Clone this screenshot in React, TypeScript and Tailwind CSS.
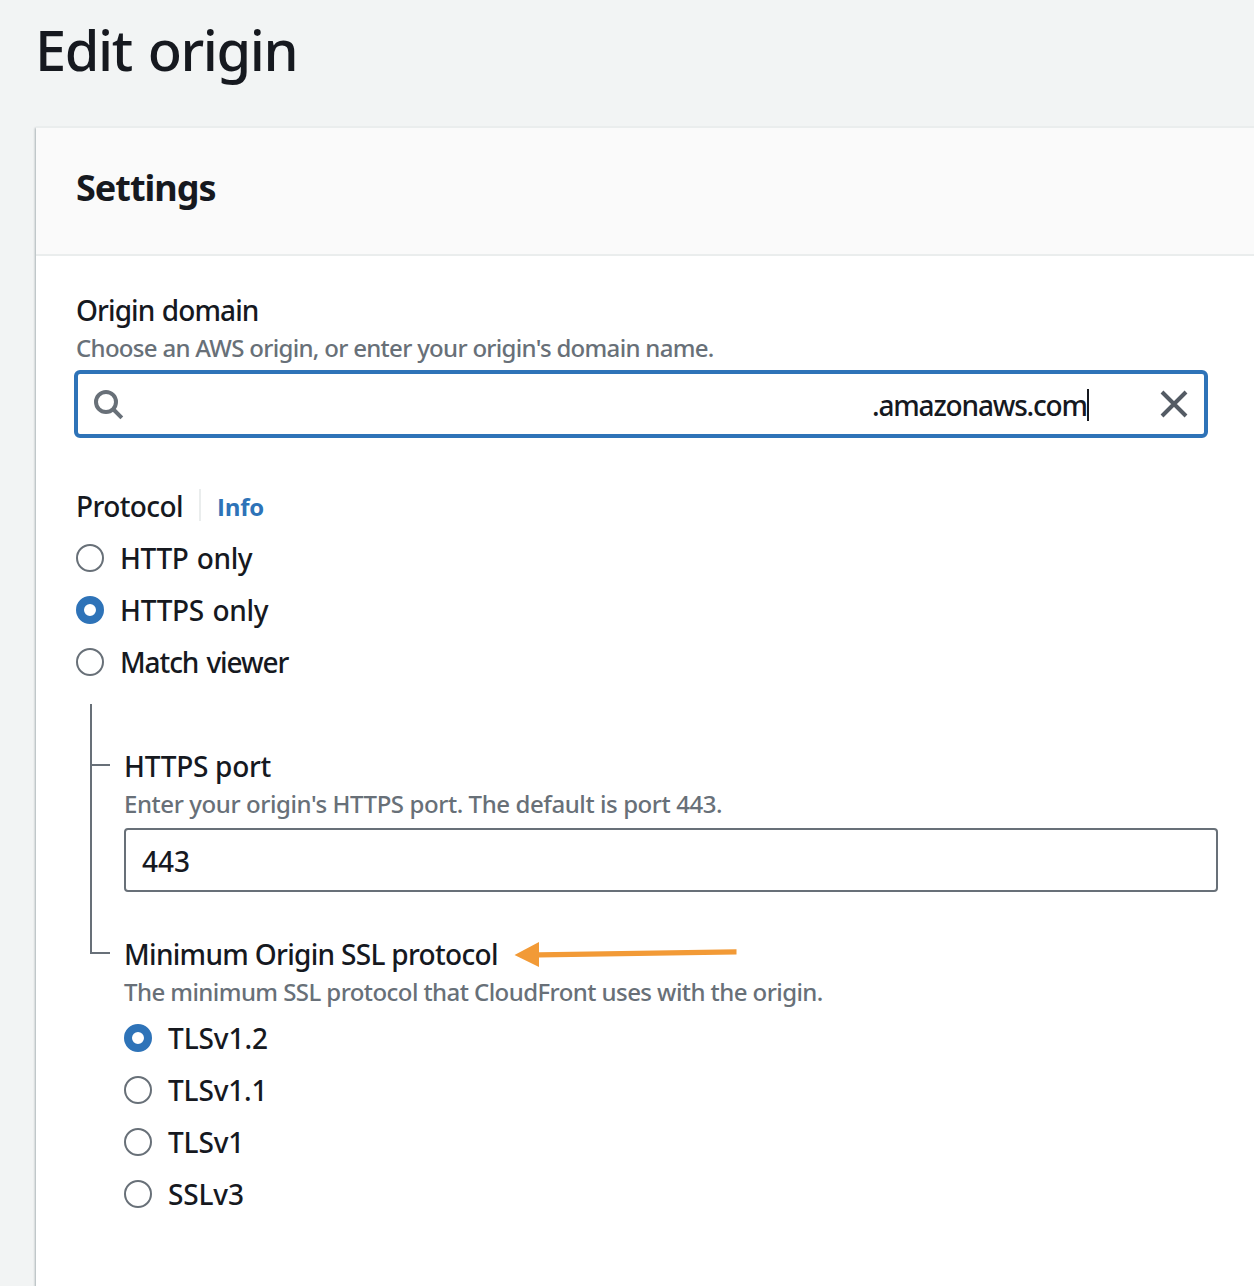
import type { ReactNode } from 'react';

function Label({ children, className = '' }: { children: ReactNode; className?: string }) {
  return <div className={`h-11 whitespace-nowrap text-[28px] leading-[46px] ${className}`}>{children}</div>;
}

function Hint({ children, className = '' }: { children: ReactNode; className?: string }) {
  return (
    <div className={`h-8 whitespace-nowrap text-2xl leading-8 text-[#687078] ${className}`}>{children}</div>
  );
}

type Option = { label: string; checked?: boolean; spacing: string };

function Radio({ label, checked = false, spacing }: Option) {
  return (
    <label className="flex h-[52px] items-center gap-4">
      {checked ? (
        <span className="size-7 rounded-full border-8 border-[#2e73b8] bg-white" />
      ) : (
        <span className="size-7 rounded-full border-2 border-[#687078] bg-white" />
      )}
      <span className={`whitespace-nowrap text-[28px] leading-[44px] ${spacing}`}>{label}</span>
    </label>
  );
}

const protocols: Option[] = [
  { label: 'HTTP only', spacing: 'tracking-[-0.4px] [word-spacing:1.5px]' },
  { label: 'HTTPS only', checked: true, spacing: 'tracking-[-0.3px] [word-spacing:1.5px]' },
  { label: 'Match viewer', spacing: 'tracking-[-1.1px] [word-spacing:2px]' },
];

const sslProtocols: Option[] = [
  { label: 'TLSv1.2', checked: true, spacing: 'tracking-[-0.08px]' },
  { label: 'TLSv1.1', spacing: 'tracking-[-0.15px]' },
  { label: 'TLSv1', spacing: 'tracking-[-0.15px]' },
  { label: 'SSLv3', spacing: 'tracking-[-0.13px]' },
];

export default function App() {
  return (
    <div className="h-[1286px] w-[1254px] overflow-hidden bg-[#f2f4f4] font-['Noto_Sans',sans-serif] font-medium text-[#16191f]">
      <h1 className="ml-[35px] h-[126px] whitespace-nowrap pt-[13px] text-[56px] leading-[72px] tracking-[-1.44px] [word-spacing:3px]">
        Edit origin
      </h1>

      <section className="ml-9 h-[1200px] w-[1260px] border-t-2 border-[#eaeded] bg-white shadow-[-1px_2px_2px_0_rgba(0,28,36,0.3)]">
        <header className="flex h-32 items-center border-b-2 border-[#eaeded] bg-[#fafafa] pb-1.5 pl-10">
          <h2 className="text-4xl font-bold leading-[44px] tracking-[-1px]">Settings</h2>
        </header>

        <div className="flex w-[1182px] flex-col pt-[31px]">
          <div className="pl-10">
            <Label className="tracking-[-0.9px] [word-spacing:1px]">Origin domain</Label>
            <Hint className="mt-px tracking-[-0.7px]">
              Choose an AWS origin, or enter your origin's domain name.
            </Hint>
            <div className="-ml-0.5 mt-1.5 flex h-[68px] w-[1134px] items-center rounded-md border-4 border-[#2e73b8] bg-white">
              <svg className="ml-4 mt-0.5 size-[30px] shrink-0" viewBox="0 0 30 30" fill="none" stroke="#687078" strokeWidth="4">
                <circle cx="12" cy="12" r="10" />
                <path d="M19 19 L27.8 27.8" />
              </svg>
              <span className="ml-[748px] mt-0.5 whitespace-nowrap text-[28px] leading-[44px] tracking-[-1.18px]">
                .amazonaws.com
              </span>
              <span className="mt-0.5 h-8 w-0.5 bg-[#16191f]" />
              <svg className="ml-auto mr-4 size-7 shrink-0" viewBox="0 0 28 28" fill="none" stroke="#545b64" strokeWidth="4">
                <path d="M2 2 L26 26 M26 2 L2 26" />
              </svg>
            </div>
          </div>

          <div className="mb-[3px] mt-[43px] flex h-12 items-center pl-10">
            <Label className="tracking-[-0.59px]">Protocol</Label>
            <span className="ml-4 h-8 w-0.5 bg-[#eaeded]" />
            <a className="ml-4 mt-1 font-['Open_Sans',sans-serif] text-2xl font-bold leading-8 tracking-[-0.3px] text-[#2e73b8]">
              Info
            </a>
          </div>
          <div className="pl-10">
            {protocols.map((option) => (
              <Radio key={option.label} {...option} />
            ))}
          </div>

          <div className="ml-[54px] mt-4 flex gap-3.5">
            <div className="w-5 shrink-0">
              <div className="h-[62px] border-b-2 border-l-2 border-[#687078]" />
              <div className="h-[188px] border-b-2 border-l-2 border-[#687078]" />
            </div>
            <div className="w-[1094px] shrink-0 pt-[39px]">
              <Label className="tracking-[-0.28px]">HTTPS port</Label>
              <Hint className="mt-px tracking-[-0.42px]">
                Enter your origin's HTTPS port. The default is port 443.
              </Hint>
              <div className="mt-2 flex h-16 items-center rounded-sm border-2 border-[#687078] bg-white pl-4 pt-0.5 text-[28px] leading-[44px]">
                443
              </div>
              <div className="mt-[39px] flex items-center gap-4">
                <Label className="tracking-[-0.69px]">Minimum Origin SSL protocol</Label>
                <svg className="mt-0.5 h-7 w-[224px]" viewBox="0 0 224 28">
                  <path d="M0.5 15 L25 2 V12.2 L222.5 9.2 V14.6 L25 17.4 V27 Z" fill="#f29a36" />
                </svg>
              </div>
              <Hint className="mt-px tracking-[-0.57px]">
                The minimum SSL protocol that CloudFront uses with the origin.
              </Hint>
              <div className="mt-1">
                {sslProtocols.map((option) => (
                  <Radio key={option.label} {...option} />
                ))}
              </div>
            </div>
          </div>
        </div>
      </section>
    </div>
  );
}
